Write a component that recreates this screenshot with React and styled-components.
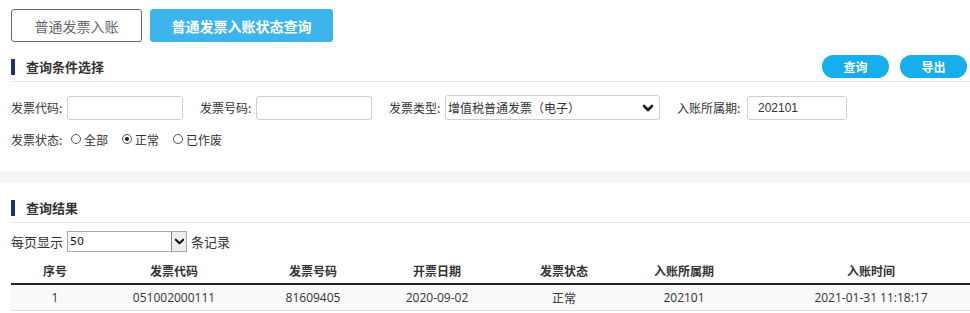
import React from 'react'
import styled, { createGlobalStyle } from 'styled-components';

const Global = createGlobalStyle`
  html, body { margin: 0; padding: 0; background: #fff; overflow: hidden; }
  body {
    font-family: "Noto Sans CJK SC", "Noto Sans", sans-serif;
    color: #333;
    font-size: 12px;
  }
`;

const columns = [
  { title: '序号', width: 88 },
  { title: '发票代码', width: 150 },
  { title: '发票号码', width: 128 },
  { title: '开票日期', width: 120 },
  { title: '发票状态', width: 134 },
  { title: '入账所属期', width: 106 },
  { title: '入账时间', width: 268 },
];

const rows = [
  ['1', '051002000111', '81609405', '2020-09-02', '正常', '202101', '2021-01-31 11:18:17'],
];

function Chevron({ size = 12, stroke = 2.6 }) {
  return (
    <svg width={size} height={size} viewBox="0 0 12 12">
      <polyline points="2,4 6,8 10,4" fill="none" stroke="#111" strokeWidth={stroke} strokeLinecap="round" strokeLinejoin="round" />
    </svg>
  );
}

function App() {
  return (
    <Page>
      <Global />
      <Panel>
        <Tabs>
          <Tab w={131}>普通发票入账</Tab>
          <Tab w={183} active>普通发票入账状态查询</Tab>
        </Tabs>
        <Header>
          <Title>查询条件选择</Title>
          <Actions>
            <PillButton>查询</PillButton>
            <PillButton>导出</PillButton>
          </Actions>
        </Header>
        <Form>
          <FormRow>
            <Field>
              <Label w={56}>发票代码:</Label>
              <TextInput w={116} />
            </Field>
            <Field>
              <Label w={56}>发票号码:</Label>
              <TextInput w={116} />
            </Field>
            <Field>
              <Label w={56}>发票类型:</Label>
              <SelectBox>
                <span>增值税普通发票（电子）</span>
                <Chevron />
              </SelectBox>
            </Field>
            <Field>
              <Label w={70}>入账所属期:</Label>
              <TextInput w={100} pad={10} defaultValue="202101" />
            </Field>
          </FormRow>
          <RadioRow>
            <Label w={60}>发票状态:</Label>
            <Radio><Dot />全部</Radio>
            <Radio><Dot checked />正常</Radio>
            <Radio><Dot />已作废</Radio>
          </RadioRow>
        </Form>
      </Panel>
      <Band />
      <Panel>
        <Header>
          <Title>查询结果</Title>
        </Header>
        <PageSize>
          每页显示
          <SmallSelect>
            <span>50</span>
            <ArrowBox><Chevron size={11} stroke={2.2} /></ArrowBox>
          </SmallSelect>
          条记录
        </PageSize>
        <TableWrap>
          <Table>
            <colgroup>
              {columns.map((c) => <col key={c.title} style={{ width: c.width }} />)}
            </colgroup>
            <thead>
              <tr>
                {columns.map((c) => <th key={c.title}>{c.title}</th>)}
              </tr>
            </thead>
            <tbody>
              {rows.map((r, i) => (
                <tr key={i}>
                  {r.map((v, j) => <td key={j}>{v}</td>)}
                </tr>
              ))}
            </tbody>
          </Table>
        </TableWrap>
      </Panel>
    </Page>
  )
}

export default App;

const Page = styled.div`
  width: 970px;
  overflow: hidden;
`;

const Panel = styled.section`
  padding-left: 11px;
`;

const Tabs = styled.div`
  display: flex;
  gap: 8px;
  padding-top: 9px;
`;

const Tab = styled.button`
  width: ${p => p.w}px;
  height: 33px;
  padding: 0;
  border-radius: 3px;
  border: 1px solid ${p => (p.active ? '#3cb4ec' : '#666')};
  background: ${p => (p.active ? '#3cb4ec' : '#fff')};
  color: ${p => (p.active ? '#fff' : '#666')};
  font-family: "Noto Sans CJK SC", sans-serif;
  font-size: 14px;
  font-weight: ${p => (p.active ? 700 : 400)};
  cursor: pointer;
`;

const Header = styled.div`
  display: flex;
  align-items: center;
  justify-content: space-between;
  height: 29px;
  margin-top: 10px;
  padding-right: 3px;
  border-bottom: 1px solid #e6e6e6;
`;

const Title = styled.h2`
  margin: 0;
  display: flex;
  align-items: center;
  font-size: 13px;
  font-weight: 700;
  color: #333;
  &::before {
    content: '';
    width: 4px;
    height: 16px;
    background: #1b2f7c;
    margin-right: 11px;
  }
`;

const Actions = styled.div`
  display: flex;
  gap: 11px;
`;

const PillButton = styled.button`
  width: 67px;
  height: 23px;
  border: none;
  border-radius: 12px;
  background: #17aeec;
  color: #fff;
  font-family: "Noto Sans CJK SC", sans-serif;
  font-size: 12px;
  font-weight: 700;
  padding: 0;
`;

const Form = styled.div`
  padding: 13px 0 22px;
`;

const FormRow = styled.div`
  display: flex;
  align-items: center;
  gap: 17px;
`;

const Field = styled.div`
  display: flex;
  align-items: center;
`;

const Label = styled.span`
  width: ${p => p.w}px;
  flex: none;
  font-size: 12px;
  color: #333;
  white-space: nowrap;
`;

const TextInput = styled.input`
  width: ${p => p.w}px;
  height: 24px;
  box-sizing: border-box;
  border: 1px solid #cfcfcf;
  border-radius: 3px;
  padding: 0 ${p => p.pad || 4}px;
  font-family: "Liberation Sans", Arial, sans-serif;
  font-size: 12px;
  color: #333;
  outline: none;
`;

const SelectBox = styled.div`
  width: 215px;
  height: 25px;
  box-sizing: border-box;
  border: 1px solid #cfcfcf;
  border-radius: 3px;
  display: flex;
  align-items: center;
  justify-content: space-between;
  padding: 0 5px 0 2px;
  font-size: 12px;
  color: #333;
`;

const RadioRow = styled.div`
  display: flex;
  align-items: center;
  margin-top: 9px;
  height: 20px;
`;

const Radio = styled.label`
  display: inline-flex;
  align-items: center;
  gap: 3px;
  margin-right: 14px;
  font-size: 12px;
  color: #333;
`;

const Dot = styled.span`
  width: 8px;
  height: 8px;
  border-radius: 50%;
  border: 1px solid #555;
  background: #fff;
  display: inline-block;
  position: relative;
  &::after {
    content: '';
    display: ${p => (p.checked ? 'block' : 'none')};
    position: absolute;
    left: 2px;
    top: 2px;
    width: 4px;
    height: 4px;
    border-radius: 50%;
    background: #222;
  }
`;

const Band = styled.div`
  height: 12px;
  background: #f5f5f5;
`;

const PageSize = styled.div`
  display: flex;
  align-items: center;
  gap: 4px;
  margin-top: 8px;
  font-size: 13px;
  color: #333;
`;

const SmallSelect = styled.div`
  width: 120px;
  height: 21px;
  box-sizing: border-box;
  border: 1px solid #aaa;
  display: flex;
  align-items: center;
  justify-content: space-between;
  padding-left: 2px;
  font-family: "DejaVu Sans", sans-serif;
  font-size: 11px;
  color: #111;
`;

const ArrowBox = styled.span`
  width: 15px;
  height: 19px;
  box-sizing: border-box;
  border-left: 1px solid #888;
  background: #ededed;
  display: flex;
  align-items: center;
  justify-content: center;
`;

const TableWrap = styled.div`
  margin-top: 6px;
`;

const Table = styled.table`
  width: 994px;
  table-layout: fixed;
  border-collapse: collapse;
  font-family: "Open Sans", "Noto Sans CJK SC", sans-serif;
  font-size: 12px;
  color: #333;
  th {
    height: 25px;
    font-family: "Noto Sans CJK SC", sans-serif;
    font-weight: 700;
    text-align: center;
    padding: 0;
    border-bottom: 2px solid #222;
  }
  td {
    height: 25px;
    text-align: center;
    padding: 0;
    background: #f9f9f9;
    border-bottom: 1px solid #ddd;
  }
`;
